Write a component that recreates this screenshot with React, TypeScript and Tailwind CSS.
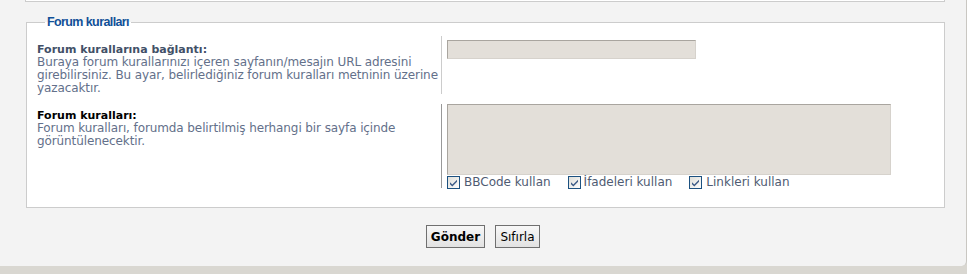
import React from "react";

function Check() {
  return (
    <svg width="13" height="13" viewBox="0 0 13 13" className="shrink-0">
      <defs>
        <linearGradient id="cbg" x1="0" y1="0" x2="1" y2="1">
          <stop offset="0" stopColor="#dcdcd7" />
          <stop offset="1" stopColor="#ffffff" />
        </linearGradient>
      </defs>
      <rect x="0.5" y="0.5" width="12" height="12" fill="url(#cbg)" stroke="#1c5180" />
      <path d="M3 6.2 L5.3 8.6 L10 3.8 L10 5.8 L5.3 10.4 L3 8.2 Z" fill="#3b5a86" />
    </svg>
  );
}

export default function App() {
  const font = { fontFamily: '"DejaVu Sans", Verdana, sans-serif' };
  return (
    <div className="w-[967px] h-[274px] bg-[#d9d7d1] overflow-hidden" style={font}>
      <div className="h-[266px] bg-[#f3f3f3] rounded-br-[5px] border-r border-[#c9c7c2] flex flex-col">
        <div className="ml-[25px] w-[920px] h-[2px] bg-white border-x border-b border-[#cccccc]" />
        <fieldset className="ml-[26px] mt-[11px] w-[919px] bg-white border border-[#cccccc] pl-[10px] pr-[10px] pt-[5px] pb-[18px]">
          <legend
            className="ml-[8px] px-[2px] text-[12.5px] leading-[18px] tracking-[-0.6px] font-bold text-[#115098]"
            style={{ fontFamily: '"Liberation Sans", Arial, sans-serif' }}
          >
            Forum kuralları
          </legend>
          <div className="flex">
            <div className="w-[405px] border-r border-[#cccccc] pt-[7px] h-[58px]">
              <div className="text-[11px] leading-[13px] font-bold text-[#425067]">Forum kurallarına bağlantı:</div>
              <div className="text-[12px] leading-[13px] tracking-[-0.1px] text-[#63708a]">
                Buraya forum kurallarınızı içeren sayfanın/mesajın URL adresini girebilirsiniz. Bu ayar, belirlediğiniz forum kuralları metninin üzerine yazacaktır.
              </div>
            </div>
            <div className="pl-[5px] pt-[4px]">
              <div className="w-[249px] h-[19px] bg-[#e3dfd9] border border-t-[#a9a59f] border-l-[#a9a59f] border-b-[#d6d2cc] border-r-[#d6d2cc]" />
            </div>
          </div>
          <div className="flex mt-[10px]">
            <div className="w-[405px] border-r border-[#999999] pt-[5px] h-[84px]">
              <div className="text-[11px] leading-[13px] font-bold text-[#000000]">Forum kuralları:</div>
              <div className="text-[12px] leading-[13px] tracking-[-0.1px] text-[#63708a]">
                Forum kuralları, forumda belirtilmiş herhangi bir sayfa içinde görüntülenecektir.
              </div>
            </div>
            <div className="pl-[5px] flex flex-col">
              <div className="w-[444px] h-[71px] bg-[#e3dfd9] border border-t-[#a9a59f] border-l-[#a9a59f] border-b-[#d6d2cc] border-r-[#d6d2cc]" />
              <div className="flex items-center h-[14px] mt-[0px] text-[12px] text-[#4f5b72]">
                <Check />
                <span className="ml-[4px]">BBCode kullan</span>
                <span className="ml-[17px] flex"><Check /></span>
                <span className="ml-[3px]">İfadeleri kullan</span>
                <span className="ml-[17px] flex"><Check /></span>
                <span className="ml-[4px]">Linkleri kullan</span>
              </div>
            </div>
          </div>
        </fieldset>
        <div className="flex justify-center gap-[10px] mt-[17px]">
          <button className="h-[23px] w-[59px] border border-[#6f6f6f] bg-gradient-to-b from-[#f7f7f7] to-[#e2e2e2] text-[12px] font-bold text-[#000]">
            Gönder
          </button>
          <button className="h-[23px] w-[45px] border border-[#6f6f6f] bg-gradient-to-b from-[#f7f7f7] to-[#e2e2e2] text-[12px] text-[#000]">
            Sıfırla
          </button>
        </div>
      </div>
    </div>
  );
}
